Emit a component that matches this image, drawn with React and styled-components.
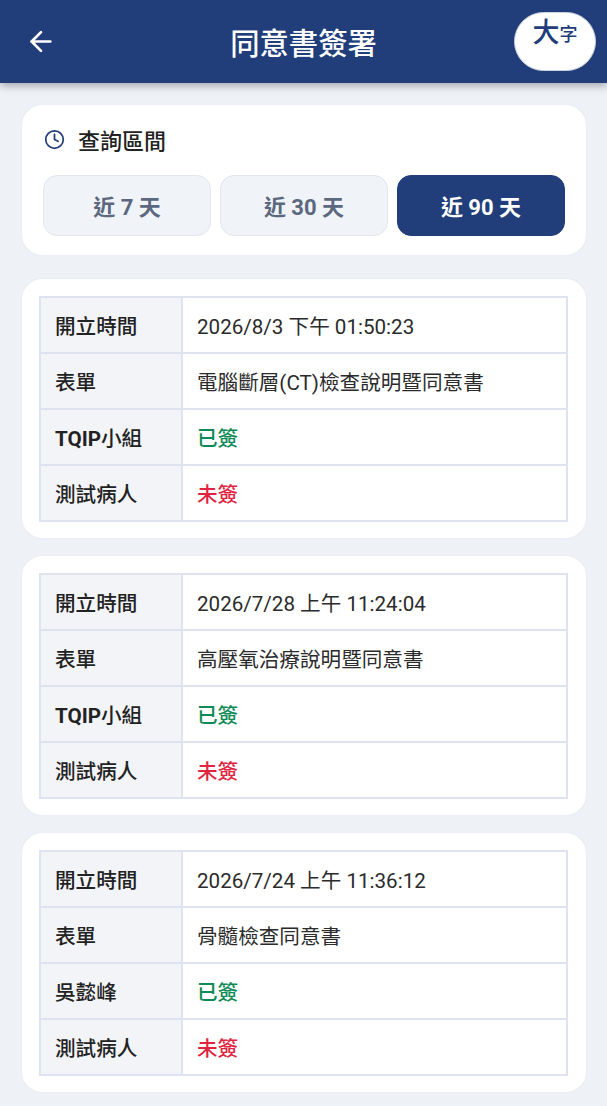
import React from "react";
import styled, { createGlobalStyle } from "styled-components";
import { ArrowLeft, Clock } from "lucide-react";

const GlobalStyle = createGlobalStyle`
  html, body {
    margin: 0;
    padding: 0;
    background: #eef1f6;
    font-family: Roboto, "Noto Sans CJK TC", sans-serif;
  }
  * { box-sizing: border-box; }
`;

const Page = styled.div`
  width: 607px;
  height: 1106px;
  overflow: hidden;
  background: #eef1f6;
`;

const Header = styled.header`
  height: 83px;
  background: #213e7a;
  box-shadow: 0 3px 8px rgba(0, 0, 0, 0.3);
  display: flex;
  align-items: center;
  justify-content: space-between;
  padding: 0 11px 0 25px;
  position: relative;
`;

const BackButton = styled.button`
  width: 32px;
  height: 32px;
  padding: 0;
  border: 0;
  background: none;
  color: #fff;
  display: flex;
  align-items: center;
  justify-content: center;
`;

const Title = styled.h1`
  margin: 0;
  position: absolute;
  left: 0;
  right: 0;
  top: 3px;
  text-align: center;
  color: #fff;
  font-size: 29.3px;
  font-weight: 500;
  line-height: 83px;
  pointer-events: none;
`;

const FontToggle = styled.button`
  width: 82px;
  height: 59px;
  margin-top: -1px;
  padding: 0 0 16px;
  border: 1px solid #c9d0de;
  border-radius: 30px;
  background: #fff;
  color: #213e7a;
  display: flex;
  align-items: center;
  justify-content: center;
  font-family: inherit;
  font-weight: 500;
`;

const BigChar = styled.span`
  font-size: 27px;
  line-height: 1;
`;

const SmallChar = styled.span`
  font-size: 18px;
  line-height: 1;
  margin-top: 4px;
`;

const Content = styled.main`
  padding: 22px 21px 0 22px;
  display: flex;
  flex-direction: column;
  gap: 18px;
`;

const Card = styled.section`
  background: #fff;
  border-radius: 20px;
  border: 1px solid #fff;
  box-shadow: 0 0 2px rgba(120, 135, 165, 0.1);
  padding: ${(p) => p.$padding};
  ${(p) => p.$extraGap && "margin-bottom: 6px;"}
`;

const FilterTitle = styled.div`
  display: flex;
  align-items: center;
  gap: 13px;
  padding-left: 1px;
  height: 30px;
  font-size: 22px;
  font-weight: 500;
  color: #222;
  margin-top: -2px;
  margin-bottom: 21px;
`;

const RangeRow = styled.div`
  display: grid;
  grid-template-columns: repeat(3, 168px);
  gap: 9px;
`;

const RangeButton = styled.button`
  height: 61px;
  border-radius: 14px;
  border: 1px solid ${(p) => (p.$active ? "#213e7a" : "#e1e6ef")};
  background: ${(p) => (p.$active ? "#213e7a" : "#f0f3f8")};
  color: ${(p) => (p.$active ? "#fff" : "#5b687e")};
  font-family: inherit;
  font-size: 22px;
  font-weight: 700;
  padding: 0 0 2px;
`;

const RecordTable = styled.table`
  width: 529px;
  border-collapse: collapse;
  table-layout: fixed;
  border: 2px solid #dde3ef;
`;

const Label = styled.th`
  width: 142px;
  height: 56px;
  padding: 0 0 1px 14px;
  border: 2px solid #dde3ef;
  background: #f2f4f8;
  color: #222;
  text-align: left;
  font-size: 20.6px;
  font-weight: 500;
`;

const LatinCode = styled.span`
  font-weight: 700;
`;

const Value = styled.td`
  padding: 0 0 1px 14px;
  border: 2px solid #dde3ef;
  color: ${(p) => p.$color || "#2b2b2b"};
  font-size: 20.6px;
  font-weight: ${(p) => (p.$color ? 500 : 400)};
`;

const records = [
  { time: "2026/8/3 下午 01:50:23", form: "電腦斷層(CT)檢查說明暨同意書", code: "TQIP", signer: "小組" },
  { time: "2026/7/28 上午 11:24:04", form: "高壓氧治療說明暨同意書", code: "TQIP", signer: "小組" },
  { time: "2026/7/24 上午 11:36:12", form: "骨髓檢查同意書", signer: "吳懿峰" },
];

const App = () => {
  const recordElement = records.map((record) => {
    return (
      <Card key={record.time} $padding="16px 17px 15px 16px">
        <RecordTable>
          <tbody>
            <tr>
              <Label>開立時間</Label>
              <Value>{record.time}</Value>
            </tr>
            <tr>
              <Label>表單</Label>
              <Value>{record.form}</Value>
            </tr>
            <tr>
              <Label>
                {record.code && <LatinCode>{record.code}</LatinCode>}
                {record.signer}
              </Label>
              <Value $color="#0f8a56">已簽</Value>
            </tr>
            <tr>
              <Label>測試病人</Label>
              <Value $color="#e0243f">未簽</Value>
            </tr>
          </tbody>
        </RecordTable>
      </Card>
    );
  });

  return (
    <Page>
      <GlobalStyle />
      <Header>
        <BackButton>
          <ArrowLeft size={33} strokeWidth={2} />
        </BackButton>
        <Title>同意書簽署</Title>
        <FontToggle>
          <BigChar>大</BigChar>
          <SmallChar>字</SmallChar>
        </FontToggle>
      </Header>
      <Content>
        <Card $padding="20px 20px 18px" $extraGap>
          <FilterTitle>
            <Clock size={21} color="#213e7a" strokeWidth={2} />
            查詢區間
          </FilterTitle>
          <RangeRow>
            <RangeButton>近 7 天</RangeButton>
            <RangeButton>近 30 天</RangeButton>
            <RangeButton $active>近 90 天</RangeButton>
          </RangeRow>
        </Card>
        {recordElement}
      </Content>
    </Page>
  );
};

export default App;
